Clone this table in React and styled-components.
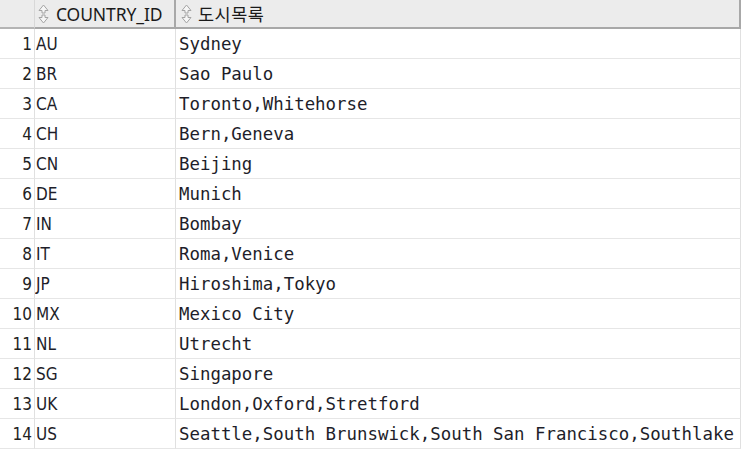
import React from 'react'
import styled, { createGlobalStyle } from 'styled-components';

const GlobalStyle = createGlobalStyle`
    body {
        margin: 0;
        background: #ffffff;
        font-family: "Noto Sans", "Noto Sans CJK KR", sans-serif;
    }
`;

const rows = [
    ['AU', 'Sydney'],
    ['BR', 'Sao Paulo'],
    ['CA', 'Toronto,Whitehorse'],
    ['CH', 'Bern,Geneva'],
    ['CN', 'Beijing'],
    ['DE', 'Munich'],
    ['IN', 'Bombay'],
    ['IT', 'Roma,Venice'],
    ['JP', 'Hiroshima,Tokyo'],
    ['MX', 'Mexico City'],
    ['NL', 'Utrecht'],
    ['SG', 'Singapore'],
    ['UK', 'London,Oxford,Stretford'],
    ['US', 'Seattle,South Brunswick,South San Francisco,Southlake'],
];

const Grid = styled.div`
    display: grid;
    grid-template-columns: 35px 141px 565px;
    width: 741px;
`;

const Corner = styled.div`
    height: 27px;
    background: #ececec;
    border-bottom: 2px solid #b4b4b4;
    border-right: 1px solid #d8d8d8;
`;

const HeadCell = styled.div`
    display: flex;
    align-items: center;
    gap: ${p => p.$ko ? '6px' : '7px'};
    height: 27px;
    padding-left: ${p => p.$ko ? '5px' : '3px'};
    background: #ececec;
    border-bottom: 2px solid #a8a8a8;
    border-right: 2px solid #a8a8a8;
    font-family: ${p => p.$ko ? '"Noto Sans CJK KR", sans-serif' : '"Noto Sans", sans-serif'};
    font-size: ${p => p.$ko ? '17.5px' : '17.5px'};
    color: #1a1a1a;
    letter-spacing: ${p => p.$ko ? '0.5px' : '-0.1px'};
    white-space: nowrap;
    overflow: hidden;
`;

const RowNum = styled.div`
    height: 29px;
    border-bottom: 1px solid #e6e6e6;
    border-right: 1px solid #e0e0e0;
    display: flex;
    align-items: center;
    justify-content: flex-end;
    padding-right: 2px;
    font-family: "Liberation Sans Narrow", "DejaVu Sans Condensed", "Liberation Sans", sans-serif;
    font-stretch: condensed;
    font-size: 17px;
    color: #222;
`;

const Cell = styled.div`
    height: 29px;
    border-bottom: 1px solid #e6e6e6;
    border-right: 1px solid #e0e0e0;
    display: flex;
    align-items: center;
    padding-left: ${p => p.$mono ? '3px' : '1px'};
    white-space: nowrap;
    overflow: hidden;
    font-family: ${p => p.$mono
        ? '"DejaVu Sans Mono", monospace'
        : '"Liberation Sans Narrow", "DejaVu Sans Condensed", "Liberation Sans", sans-serif'};
    font-stretch: ${p => p.$mono ? 'normal' : 'condensed'};
    font-size: ${p => p.$mono ? '17.4px' : '17px'};
    color: #1e1e2a;
`;

const SortIcon = () => (
    <svg width="11" height="20" viewBox="0 0 11 20">
        <path d="M5.5 1 L10 6.5 L7 6.5 L7 9 L4 9 L4 6.5 L1 6.5 Z" fill="#f6f6f6" stroke="#a4a4a4" strokeWidth="1" />
        <path d="M5.5 19 L10 13.5 L7 13.5 L7 11 L4 11 L4 13.5 L1 13.5 Z" fill="#f6f6f6" stroke="#a4a4a4" strokeWidth="1" />
    </svg>
);

const App = () => {
    return (
        <>
            <GlobalStyle />
            <Grid>
                <Corner />
                <HeadCell><SortIcon />COUNTRY_ID</HeadCell>
                <HeadCell $ko><SortIcon />도시목록</HeadCell>
                {rows.map(([id, cities], i) => (
                    <React.Fragment key={id}>
                        <RowNum>{i + 1}</RowNum>
                        <Cell>{id}</Cell>
                        <Cell $mono>{cities}</Cell>
                    </React.Fragment>
                ))}
            </Grid>
        </>
    )
}

export default App
